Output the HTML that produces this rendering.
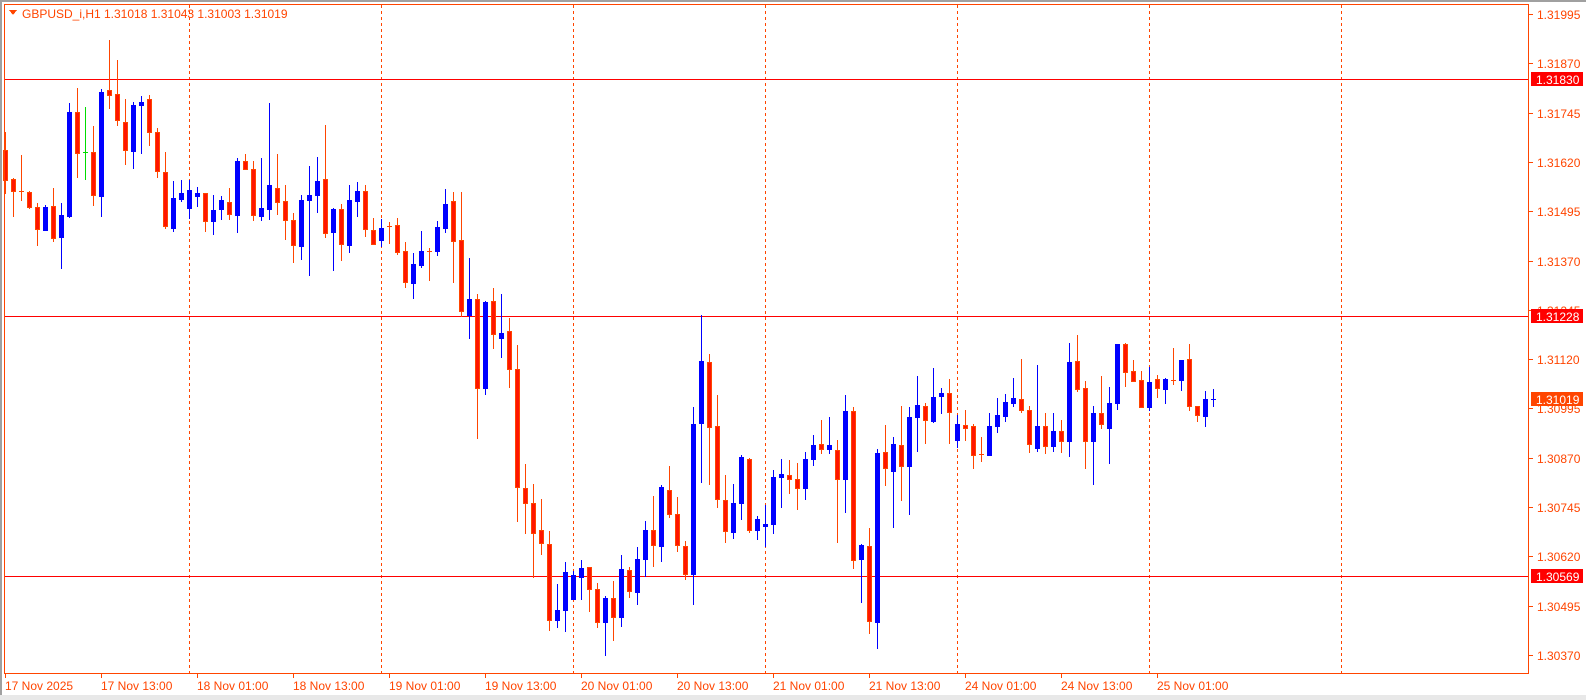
<!DOCTYPE html>
<html><head><meta charset="utf-8">
<style>
html,body{margin:0;padding:0;background:#fff;width:1586px;height:700px;overflow:hidden}
svg{display:block}
text{font-family:"Liberation Sans",sans-serif;font-size:12px}
</style></head>
<body>
<svg id="s" width="1586" height="700" xmlns="http://www.w3.org/2000/svg" shape-rendering="crispEdges">
<rect x="0" y="0" width="1586" height="700" fill="#fff"/>
<rect x="0" y="0" width="1586" height="2" fill="#a0a0a0"/>
<rect x="0" y="0" width="2" height="700" fill="#a0a0a0"/>
<rect x="0" y="695" width="1586" height="5" fill="#e8e8e8"/>
<g id="grid"></g>
<g id="c"></g>
<rect x="4.5" y="4.5" width="1524" height="669" fill="none" stroke="#ff4500" stroke-width="1"/>
<text x="22" y="18" fill="#ff4500">GBPUSD_i,H1</text>
<text x="104" y="18" fill="#ff4500">1.31018 1.31043 1.31003 1.31019</text>
<polygon points="9,10 17,10 13,15" fill="#ff4500"/>
<g id="ax"></g>
</svg>
<script>
var NS="http://www.w3.org/2000/svg";
function el(p,t,a,txt){var e=document.createElementNS(NS,t);for(var k in a)e.setAttribute(k,a[k]);if(txt!=null)e.textContent=txt;p.appendChild(e);return e;}
var grid=document.getElementById('grid'),cg=document.getElementById('c'),ax=document.getElementById('ax');
[189,381,573,765,957,1149,1341].forEach(function(x){el(grid,'line',{x1:x+.5,y1:5,x2:x+.5,y2:673,stroke:'#ff4500','stroke-dasharray':'3,3'});});
[79,316,576].forEach(function(y){el(grid,'rect',{x:5,y:y,width:1524,height:1,fill:'#ff0000'});});
var D=[
['r',150,180,132,193],['r',179,191,178,216],['r',191,191,155,200],['r',192,207,191,208],['r',207,229,203,245],
['b',207,230,205,230],['r',206,238,188,241],['b',215,237,203,268],['b',112,216,103,217],['r',112,153,88,177],
['g',152,152,107,179],['r',152,195,126,205],['b',92,196,89,216],['r',90,95,40,108],['r',94,120,60,125],
['r',122,150,99,164],['b',105,151,102,168],['b',102,105,96,153],['r',99,132,95,145],['r',132,171,128,177],
['r',172,226,152,228],['b',198,228,181,231],['b',193,199,180,201],['b',190,208,180,218],
['b',193,196,187,206],['r',193,221,193,231],['b',210,221,195,234],['b',200,209,196,219],['r',202,214,188,219],
['b',161,215,158,232],['r',161,169,154,169],['r',169,215,161,220],['b',208,216,158,220],['b',185,209,103,219],
['r',188,202,154,214],['r',201,220,185,239],['r',220,245,213,262],['b',200,246,195,259],['b',195,200,166,275],
['b',181,195,157,212],['r',179,233,125,237],['b',209,232,208,270],['r',209,244,204,260],['b',200,245,185,252],
['b',191,201,182,216],['r',191,229,185,236],['r',230,244,218,244],['b',228,240,219,246],['r',226,226,222,243],
['r',225,252,218,254],['r',251,282,242,287],['b',264,283,253,298],['b',251,265,231,267],['r',251,251,248,280],
['b',227,251,221,255],['b',204,228,189,232],['r',201,241,192,282],['r',240,311,192,316],['b',299,315,258,338],
['r',299,388,294,438],['b',302,388,301,394],['r',301,334,288,348],['b',333,338,294,357],['r',331,369,318,387],
['r',369,487,345,521],['r',488,503,464,533],['r',503,533,484,577],['r',530,543,499,554],['r',544,620,531,630],
['b',610,620,584,627],['b',572,610,562,631],['b',575,599,571,599],['b',568,577,560,599],['r',567,589,567,611],
['r',589,622,583,627],['b',598,622,596,655],['r',598,617,581,640],['b',569,617,555,626],['r',570,591,567,597],
['b',559,592,547,604],['b',530,559,521,576],['r',530,545,496,566],['b',487,546,485,561],['r',490,514,466,517],
['r',514,545,497,551],['r',546,574,541,579],['b',424,574,407,604],['b',361,423,315,482],['r',362,427,354,484],
['r',426,499,395,507],['r',500,531,475,542],['b',503,532,484,538],['b',457,503,455,519],['r',459,530,458,532],
['b',519,530,516,539],['b',524,526,505,546],['b',477,524,470,533],['b',474,477,459,507],['r',475,479,460,493],
['r',479,488,463,509],['b',459,488,452,499],['b',445,459,435,465],['r',444,449,420,453],['b',445,449,417,453],
['r',450,479,440,542],['b',411,479,395,512],['r',411,560,407,568],['b',545,559,544,602],['r',546,621,528,633],
['b',453,622,449,648],['r',452,468,425,485],['b',444,471,437,527],['r',445,466,406,500],['b',417,466,407,514],
['b',405,417,376,451],['r',406,420,403,443],['b',397,421,368,422],['b',393,396,388,413],['r',393,412,379,443],
['b',424,440,415,447],['r',425,428,410,440],['r',426,455,424,468],['r',454,454,437,461],['b',426,455,413,455],
['b',415,426,398,432],['b',402,416,394,421],['b',398,403,378,406],['r',399,410,359,412],['r',410,444,406,452],
['b',426,448,365,451],['r',426,446,413,453],['b',431,446,413,451],['r',431,441,420,452],['b',362,441,343,456],
['r',361,389,335,391],['r',388,441,381,468],['b',413,441,406,484],['r',413,424,376,428],['b',403,428,387,463],
['b',344,403,344,409],['r',344,372,343,386],['r',371,381,360,381],['r',380,407,371,407],['b',382,407,367,410],
['r',379,388,375,397],['b',379,389,378,403],['r',380,380,348,384],['b',360,380,360,390],['r',359,406,344,410],
['r',406,415,406,421],['b',399,416,391,426],['b',399,399,389,406]
];
D.forEach(function(d,i){
  var x=5+8*i,t=d[0],top=d[1],bot=d[2],h=d[3],l=d[4];
  var wc=t=='b'?'#0000ff':(t=='g'?'#00dd00':'#ff4500');
  el(cg,'rect',{x:x,y:h,width:1,height:Math.max(1,l-h+1),fill:wc});
  if(bot-top<=1){ el(cg,'rect',{x:x-2,y:top,width:5,height:1,fill:wc}); return; }
  if(t=='b') el(cg,'rect',{x:x-2,y:top,width:5,height:bot-top+1,fill:'#0000ff'});
  else { el(cg,'rect',{x:x-2,y:top,width:5,height:bot-top+1,fill:'#ff4500'});
         el(cg,'rect',{x:x-1,y:top+1,width:3,height:bot-top-1,fill:'#ff1500'}); }
});
var P=['1.31995','1.31870','1.31745','1.31620','1.31495','1.31370','1.31245','1.31120','1.30995','1.30870','1.30745','1.30620','1.30495','1.30370'];
P.forEach(function(p,k){var y=Math.round(14+49.3*k);
  el(ax,'rect',{x:1529,y:y,width:4,height:1,fill:'#ff4500'});
  el(ax,'text',{x:1537,y:y+5,fill:'#ff4500'},p);});
[[79,'1.31830','#ff0000'],[316,'1.31228','#ff0000'],[576,'1.30569','#ff0000'],[399,'1.31019','#ff4500']].forEach(function(a){
  el(ax,'rect',{x:1531,y:a[0]-7,width:52,height:14,fill:a[2]});
  el(ax,'text',{x:1536,y:a[0]+5,fill:'#fff'},a[1]);});
var T=['17 Nov 2025','17 Nov 13:00','18 Nov 01:00','18 Nov 13:00','19 Nov 01:00','19 Nov 13:00','20 Nov 01:00','20 Nov 13:00','21 Nov 01:00','21 Nov 13:00','24 Nov 01:00','24 Nov 13:00','25 Nov 01:00'];
T.forEach(function(s,k){var x=5+96*k;
  el(ax,'rect',{x:x,y:674,width:1,height:4,fill:'#ff4500'});
  el(ax,'text',{x:x,y:690,fill:'#ff4500'},s);});
</script>
</body></html>
